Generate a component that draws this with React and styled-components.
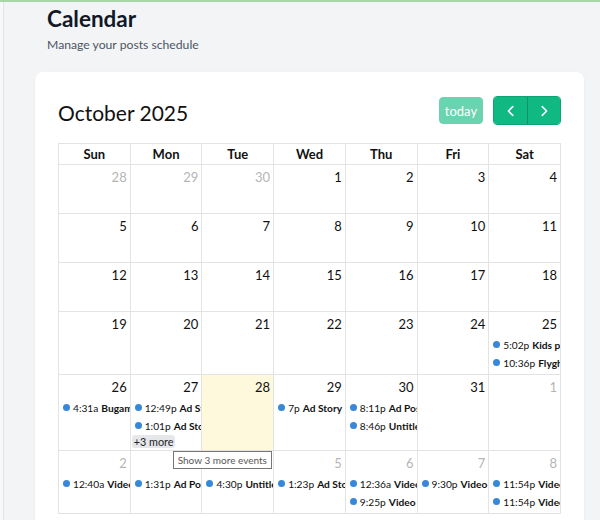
import styled, { createGlobalStyle } from 'styled-components';

const GlobalStyle = createGlobalStyle`
  html, body {
    margin: 0;
    padding: 0;
    background: #f3f4f6;
    font-family: Lato, "Liberation Sans", sans-serif;
    color: #111827;
  }
  * {
    box-sizing: border-box;
  }
`;

const Shell = styled.div`
  display: flex;
  min-height: 520px;
  border-top: 2px solid #a9d6a9;
  overflow: hidden;
`;

const SideEdge = styled.div`
  width: 4px;
  flex-shrink: 0;
  background: #f7f8f9;
  border-right: 1px solid #e2e4e8;
`;

const Main = styled.main`
  flex: 1;
  padding: 2px 16px 0 31px;
`;

const PageHeader = styled.header`
  padding: 0 12px;
  margin-bottom: 18px;
`;

const PageTitle = styled.h1`
  margin: 0;
  font-size: 22.5px;
  line-height: 30px;
  font-weight: 700;
  color: #111827;
`;

const PageSubtitle = styled.p`
  margin: 2px 0 0;
  font-size: 12.2px;
  line-height: 18px;
  color: #4b5563;
`;

const Card = styled.section`
  background: #fff;
  border-radius: 8px;
  box-shadow: 0 1px 3px rgba(0, 0, 0, 0.06);
  padding: 24px 23px 40px;
`;

const Toolbar = styled.div`
  display: flex;
  align-items: center;
  justify-content: space-between;
  height: 29px;
  margin-bottom: 18px;
`;

const MonthTitle = styled.h2`
  margin: 0;
  font-size: 21px;
  font-weight: 400;
  color: #111;
  padding-top: 3px;
`;

const ToolbarActions = styled.div`
  display: flex;
  align-items: center;
  gap: 10px;
`;

const TodayButton = styled.button`
  height: 27px;
  width: 44px;
  padding: 0;
  border: 1px solid #10b981;
  border-radius: 4px;
  background: #10b981;
  opacity: 0.62;
  color: #fff;
  font-family: inherit;
  font-size: 13px;
  cursor: default;
`;

const ButtonGroup = styled.div`
  display: flex;
  border-radius: 4px;
  overflow: hidden;
  border: 1px solid #0ea371;
`;

const NavButton = styled.button`
  width: 33px;
  height: 27px;
  display: flex;
  align-items: center;
  justify-content: center;
  padding: 0;
  border: none;
  border-left: ${(p) => (p.$first ? 'none' : '1px solid #0c9466')};
  background: #10b981;
  color: #fff;
  cursor: pointer;
`;

const Grid = styled.div`
  display: grid;
  grid-template-columns: repeat(7, 1fr);
  border-top: 1px solid #e3e3e3;
  border-left: 1px solid #e3e3e3;
`;

const HeadCell = styled.div`
  height: 21px;
  display: flex;
  align-items: center;
  justify-content: center;
  font-size: 13px;
  font-weight: 700;
  color: #111;
  border-right: 1px solid #e3e3e3;
  border-bottom: 1px solid #e3e3e3;
`;

const DayCell = styled.div`
  position: relative;
  min-height: 49px;
  min-width: 0;
  padding-bottom: 2px;
  background: ${(p) => (p.$today ? '#fef8dc' : '#fff')};
  border-right: 1px solid #e3e3e3;
  border-bottom: 1px solid #e3e3e3;
`;

const DayNumber = styled.div`
  padding: 3px 3px 0;
  height: 23px;
  text-align: right;
  font-size: 13px;
  line-height: 18px;
  color: ${(p) => (p.$muted ? '#b5b5b5' : '#111')};
`;

const EventRow = styled.div`
  display: flex;
  align-items: center;
  height: 17px;
  margin: 1px 0 1px 4px;
  white-space: nowrap;
  overflow: hidden;
  font-size: 10.2px;
  color: #111;
`;

const Dot = styled.span`
  flex-shrink: 0;
  width: 7px;
  height: 7px;
  border-radius: 50%;
  background: #3788d8;
  margin-right: 3px;
`;

const EventTime = styled.span`
  margin-right: 3px;
`;

const EventTitle = styled.span`
  font-weight: 700;
`;

const MoreWrap = styled.div`
  position: relative;
  display: flex;
  align-items: flex-start;
  margin: 0 0 0 1px;
  height: 13px;
`;

const MoreLink = styled.span`
  display: block;
  padding: 0 2px;
  border-radius: 3px;
  background: #e5e7eb;
  font-size: 10.8px;
  line-height: 13px;
  color: #222;
`;

const Tooltip = styled.div`
  position: absolute;
  left: 41px;
  top: 16px;
  z-index: 2;
  padding: 0 4px;
  height: 18px;
  line-height: 16px;
  white-space: nowrap;
  background: #fff;
  border: 1px solid #767676;
  font-size: 10px;
  color: #575757;
`;

const Chevron = ({ dir }) => (
  <svg width="14" height="14" viewBox="0 0 16 16" fill="none">
    <path
      d={dir === 'left' ? 'M10 3 L5 8 L10 13' : 'M6 3 L11 8 L6 13'}
      stroke="currentColor"
      strokeWidth="1.8"
      strokeLinecap="round"
      strokeLinejoin="round"
    />
  </svg>
);

const weekdays = ['Sun', 'Mon', 'Tue', 'Wed', 'Thu', 'Fri', 'Sat'];

const ev = (time, title) => ({ time, title });

const weeks = [
  [28, 29, 30].map((d) => ({ d, muted: true })).concat([1, 2, 3, 4].map((d) => ({ d }))),
  [5, 6, 7, 8, 9, 10, 11].map((d) => ({ d })),
  [12, 13, 14, 15, 16, 17, 18].map((d) => ({ d })),
  [
    { d: 19 },
    { d: 20 },
    { d: 21 },
    { d: 22 },
    { d: 23 },
    { d: 24 },
    { d: 25, events: [ev('5:02p', 'Kids promo'), ev('10:36p', 'Flyght deals')] },
  ],
  [
    { d: 26, events: [ev('4:31a', 'Bugambilia')] },
    { d: 27, events: [ev('12:49p', 'Ad Story'), ev('1:01p', 'Ad Story')], more: 3 },
    { d: 28, today: true },
    { d: 29, events: [ev('7p', 'Ad Story')] },
    { d: 30, events: [ev('8:11p', 'Ad Post'), ev('8:46p', 'Untitled')] },
    { d: 31 },
    { d: 1, muted: true },
  ],
  [
    { d: 2, muted: true, events: [ev('12:40a', 'Video post')] },
    { d: 3, muted: true, events: [ev('1:31p', 'Ad Post')] },
    { d: 4, muted: true, events: [ev('4:30p', 'Untitled')] },
    { d: 5, muted: true, events: [ev('1:23p', 'Ad Story')] },
    { d: 6, muted: true, events: [ev('12:36a', 'Video post'), ev('9:25p', 'Video')] },
    { d: 7, muted: true, events: [ev('9:30p', 'Video : reel')] },
    { d: 8, muted: true, events: [ev('11:54p', 'Video post'), ev('11:54p', 'Video post')] },
  ],
];

const App = () => {
  return (
    <>
      <GlobalStyle />
      <Shell>
        <SideEdge />
        <Main>
          <PageHeader>
            <PageTitle>Calendar</PageTitle>
            <PageSubtitle>Manage your posts schedule</PageSubtitle>
          </PageHeader>
          <Card>
            <Toolbar>
              <MonthTitle>October 2025</MonthTitle>
              <ToolbarActions>
                <TodayButton disabled>today</TodayButton>
                <ButtonGroup>
                  <NavButton $first aria-label="prev">
                    <Chevron dir="left" />
                  </NavButton>
                  <NavButton aria-label="next">
                    <Chevron dir="right" />
                  </NavButton>
                </ButtonGroup>
              </ToolbarActions>
            </Toolbar>
            <Grid>
              {weekdays.map((w) => (
                <HeadCell key={w}>{w}</HeadCell>
              ))}
              {weeks.map((week, wi) =>
                week.map((day, di) => (
                  <DayCell key={`${wi}-${di}`} $today={day.today}>
                    <DayNumber $muted={day.muted}>{day.d}</DayNumber>
                    {(day.events || []).map((e, i) => (
                      <EventRow key={i}>
                        <Dot />
                        <EventTime>{e.time}</EventTime>
                        <EventTitle>{e.title}</EventTitle>
                      </EventRow>
                    ))}
                    {day.more && (
                      <MoreWrap>
                        <MoreLink>+{day.more} more</MoreLink>
                        <Tooltip>Show {day.more} more events</Tooltip>
                      </MoreWrap>
                    )}
                  </DayCell>
                ))
              )}
            </Grid>
          </Card>
        </Main>
      </Shell>
    </>
  );
};

export default App;
